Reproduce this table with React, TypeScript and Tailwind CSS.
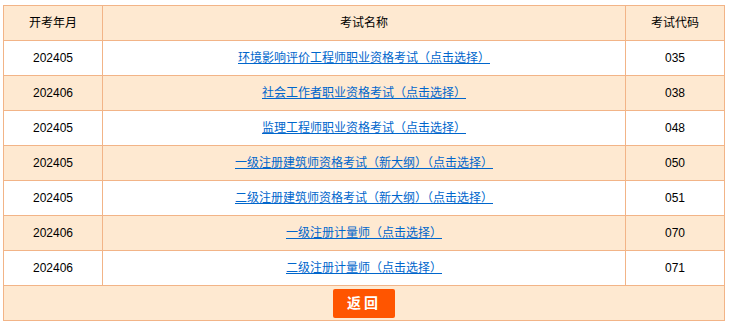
const rows = [
  { month: '202405', name: '环境影响评价工程师职业资格考试（点击选择）', code: '035' },
  { month: '202406', name: '社会工作者职业资格考试（点击选择）', code: '038' },
  { month: '202405', name: '监理工程师职业资格考试（点击选择）', code: '048' },
  { month: '202405', name: '一级注册建筑师资格考试（新大纲）（点击选择）', code: '050' },
  { month: '202405', name: '二级注册建筑师资格考试（新大纲）（点击选择）', code: '051' },
  { month: '202406', name: '一级注册计量师（点击选择）', code: '070' },
  { month: '202406', name: '二级注册计量师（点击选择）', code: '071' },
];

export default function App() {
  const font = "font-['Liberation_Sans','Noto_Sans_CJK_SC',sans-serif]";
  return (
    <div className={`h-[326px] w-[736px] bg-white pl-[3px] pt-[5px] text-[12px] text-black ${font}`}>
      <div className="grid w-[722px] grid-cols-[98px_522px_98px] gap-px bg-[#f2b487] p-px">
        <div className="flex h-[34px] items-center justify-center bg-[#fee9d1]">开考年月</div>
        <div className="flex h-[34px] items-center justify-center bg-[#fee9d1]">考试名称</div>
        <div className="flex h-[34px] items-center justify-center bg-[#fee9d1]">考试代码</div>
        {rows.map((r, i) => {
          const bg = i % 2 === 0 ? 'bg-white' : 'bg-[#fee9d1]';
          return [
            <div key={`m${i}`} className={`flex h-[34px] items-center justify-center ${bg}`}>
              {r.month}
            </div>,
            <div key={`n${i}`} className={`flex h-[34px] items-center justify-center ${bg}`}>
              <a href="#" className="text-[#0066cc] underline">
                {r.name}
              </a>
            </div>,
            <div key={`c${i}`} className={`flex h-[34px] items-center justify-center ${bg}`}>
              {r.code}
            </div>,
          ];
        })}
        <div className="col-span-3 flex h-[34px] items-center justify-center bg-[#fee9d1]">
          <button className="h-[29px] w-[62px] rounded-[2px] bg-[#ff5500] text-[14px] font-bold tracking-[3px] text-white">
            返回
          </button>
        </div>
      </div>
    </div>
  );
}
